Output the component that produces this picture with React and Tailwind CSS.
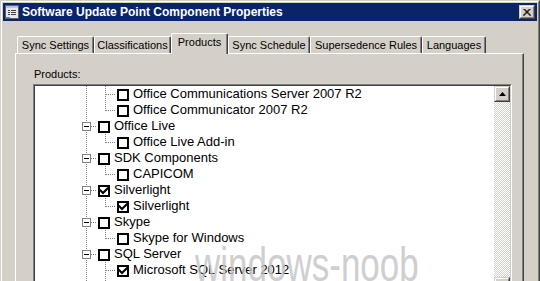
import React from "react";

const F = { fontFamily: '"Liberation Sans", Arial, sans-serif' };

function Check() {
  return (
    <svg width="8" height="8" viewBox="0 0 8 8" className="block">
      <path d="M0.5 3.5 L3 6 L7.5 1.5" stroke="#000" strokeWidth="2" fill="none" strokeLinecap="square" />
    </svg>
  );
}

function Box({ checked }) {
  return (
    <span className="absolute left-[2px] top-[3px] w-[12px] h-[12px] border-2 border-black bg-white flex items-center justify-center">
      {checked && <Check />}
    </span>
  );
}

const VDOT = "bg-[repeating-linear-gradient(to_bottom,#808080_0px_1px,transparent_1px_2px)]";
const HDOT = "bg-[repeating-linear-gradient(to_right,#808080_0px_1px,transparent_1px_2px)]";

function Row({ level, label, checked, last }) {
  return (
    <div className="flex h-4 shrink-0">
      <div className="w-[42px] shrink-0" />
      <div className="relative w-[19px] shrink-0">
        <span className={`absolute left-[9px] top-0 bottom-0 w-px ${VDOT}`} />
        {level === 1 && (
          <>
            <span className={`absolute left-[10px] top-[8px] w-[9px] h-px ${HDOT}`} />
            <span className="absolute left-[5px] top-[4px] w-[9px] h-[9px] border border-[#808080] bg-white flex items-center justify-center">
              <span className="w-[5px] h-px bg-black" />
            </span>
          </>
        )}
      </div>
      {level === 2 && (
        <div className="relative w-[19px] shrink-0">
          <span className={`absolute left-[9px] top-0 w-px ${last ? "h-[9px]" : "h-4"} ${VDOT}`} />
          <span className={`absolute left-[10px] top-[8px] w-[10px] h-px ${HDOT}`} />
        </div>
      )}
      <div className="relative w-[18px] shrink-0">
        <Box checked={checked} />
      </div>
      <span className="text-[13px] leading-4 text-black whitespace-nowrap">{label}</span>
    </div>
  );
}

const rows = [
  { level: 2, label: "Office Communications Server 2007 R2" },
  { level: 2, label: "Office Communicator 2007 R2", last: true },
  { level: 1, label: "Office Live" },
  { level: 2, label: "Office Live Add-in", last: true },
  { level: 1, label: "SDK Components" },
  { level: 2, label: "CAPICOM", last: true },
  { level: 1, label: "Silverlight", checked: true },
  { level: 2, label: "Silverlight", checked: true, last: true },
  { level: 1, label: "Skype" },
  { level: 2, label: "Skype for Windows", last: true },
  { level: 1, label: "SQL Server" },
  { level: 2, label: "Microsoft SQL Server 2012", checked: true },
  { level: 2, label: "Microsoft SQL Server 2014", checked: true },
];

function Tab({ label, w }) {
  return (
    <div
      className={`h-[17px] ${w} shrink-0 flex items-start justify-center pt-[2px] border-l border-t border-r border-white border-r-[#404040] rounded-t-[2px] shadow-[inset_-1px_0_#808080] text-[11px] leading-[13px] text-black whitespace-nowrap`}
    >
      {label}
    </div>
  );
}

function Raised({ className, children }) {
  return (
    <div className={`border border-t-[#d4d0c8] border-l-[#d4d0c8] border-r-[#404040] border-b-[#404040] bg-[#d4d0c8] ${className}`}>
      <div className="w-full h-full border border-t-white border-l-white border-r-[#808080] border-b-[#808080] flex items-center justify-center">
        {children}
      </div>
    </div>
  );
}

export default function App() {
  return (
    <div style={F} className="w-[540px] h-[281px] overflow-hidden bg-[#d4d0c8]">
      <div className="h-[300px] border-t border-l border-t-[#d4d0c8] border-l-[#d4d0c8] border-r border-r-[#404040]">
        <div className="h-full border-t border-l border-t-white border-l-white border-r border-r-[#808080] p-px flex flex-col">
          {/* title bar */}
          <div className="h-[18px] shrink-0 bg-[#0a246a] flex items-center pl-px pr-[2px]">
            <svg width="16" height="16" viewBox="0 0 16 16" className="shrink-0">
              <rect x="1.5" y="1.5" width="13" height="13" fill="#e8e8e8" stroke="#606060" />
              <rect x="2" y="2" width="12" height="2" fill="#b8c4d8" />
              <rect x="4" y="6" width="2" height="1" fill="#404040" />
              <rect x="7" y="6" width="5" height="1" fill="#404040" />
              <rect x="4" y="8" width="2" height="1" fill="#404040" />
              <rect x="7" y="8" width="5" height="1" fill="#404040" />
              <rect x="4" y="10" width="2" height="1" fill="#404040" />
              <rect x="7" y="10" width="5" height="1" fill="#404040" />
              <rect x="2" y="13" width="4" height="1" fill="#00b0e0" />
            </svg>
            <span className="ml-[2px] text-white font-bold text-[12px] leading-[18px] whitespace-nowrap">
              Software Update Point Component Properties
            </span>
            <div className="flex-1" />
            <Raised className="w-[16px] h-[14px]">
              <svg width="8" height="7" viewBox="0 0 8 7" className="block">
                <path d="M0.5 0 L7.5 7 M1.5 0 L8 6.5 M7.5 0 L0.5 7 M6.5 0 L0 6.5" stroke="#000" strokeWidth="1" fill="none" />
              </svg>
            </Raised>
          </div>

          {/* body */}
          <div className="flex-1 pl-[12px] pr-[13px] pt-[12px] flex flex-col">
            {/* tab strip */}
            <div className="h-[20px] flex items-end pl-[2px] relative z-10">
              <Tab label="Sync Settings" w="w-[77px]" />
              <Tab label="Classifications" w="w-[77px]" />
              <div className="h-[21px] w-[57px] shrink-0 mb-[-1px] bg-[#d4d0c8] flex items-start justify-center pt-[2px] border-l border-t border-r border-white border-r-[#404040] rounded-t-[2px] shadow-[inset_-1px_0_#808080] text-[11px] leading-[13px] text-black whitespace-nowrap">
                Products
              </div>
              <Tab label="Sync Schedule" w="w-[82px]" />
              <Tab label="Supersedence Rules" w="w-[112px]" />
              <Tab label="Languages" w="w-[64px]" />
            </div>

            {/* panel */}
            <div className="flex-1 border-l border-t border-white border-r border-r-[#404040] shadow-[inset_-1px_0_#808080] pt-[14px] pl-[17px] pr-[11px]">
              <div className="pl-px text-[11px] leading-[13px] text-black">Products:</div>
              <div className="mt-[3px] w-[479px] h-[220px] border border-t-[#808080] border-l-[#808080] border-r-white border-b-white relative">
                <div className="w-full h-full border border-t-[#404040] border-l-[#404040] border-r-[#d4d0c8] border-b-[#d4d0c8] bg-white flex">
                  <div className="flex-1 flex flex-col overflow-hidden">
                    {rows.map((r, i) => (
                      <Row key={i} {...r} />
                    ))}
                  </div>
                  <div className="w-[16px] shrink-0 flex flex-col">
                    <Raised className="h-[16px] w-[16px] shrink-0">
                      <svg width="7" height="4" viewBox="0 0 7 4" className="block">
                        <path d="M3.5 0 L7 4 L0 4 Z" fill="#000" />
                      </svg>
                    </Raised>
                    <div className="h-[175px] shrink-0 bg-[repeating-conic-gradient(#d4d0c8_0%_25%,#ffffff_0%_50%)] bg-[length:2px_2px]" />
                    <Raised className="h-[30px] w-[16px] shrink-0" />
                  </div>
                </div>
                <div className="absolute left-[161px] top-[154px] text-[35px] leading-[35px] text-[#c4c4c4] opacity-80 whitespace-nowrap origin-top scale-y-[1.4] pointer-events-none">
                  windows-noob
                </div>
              </div>
            </div>
          </div>
        </div>
      </div>
    </div>
  );
}
